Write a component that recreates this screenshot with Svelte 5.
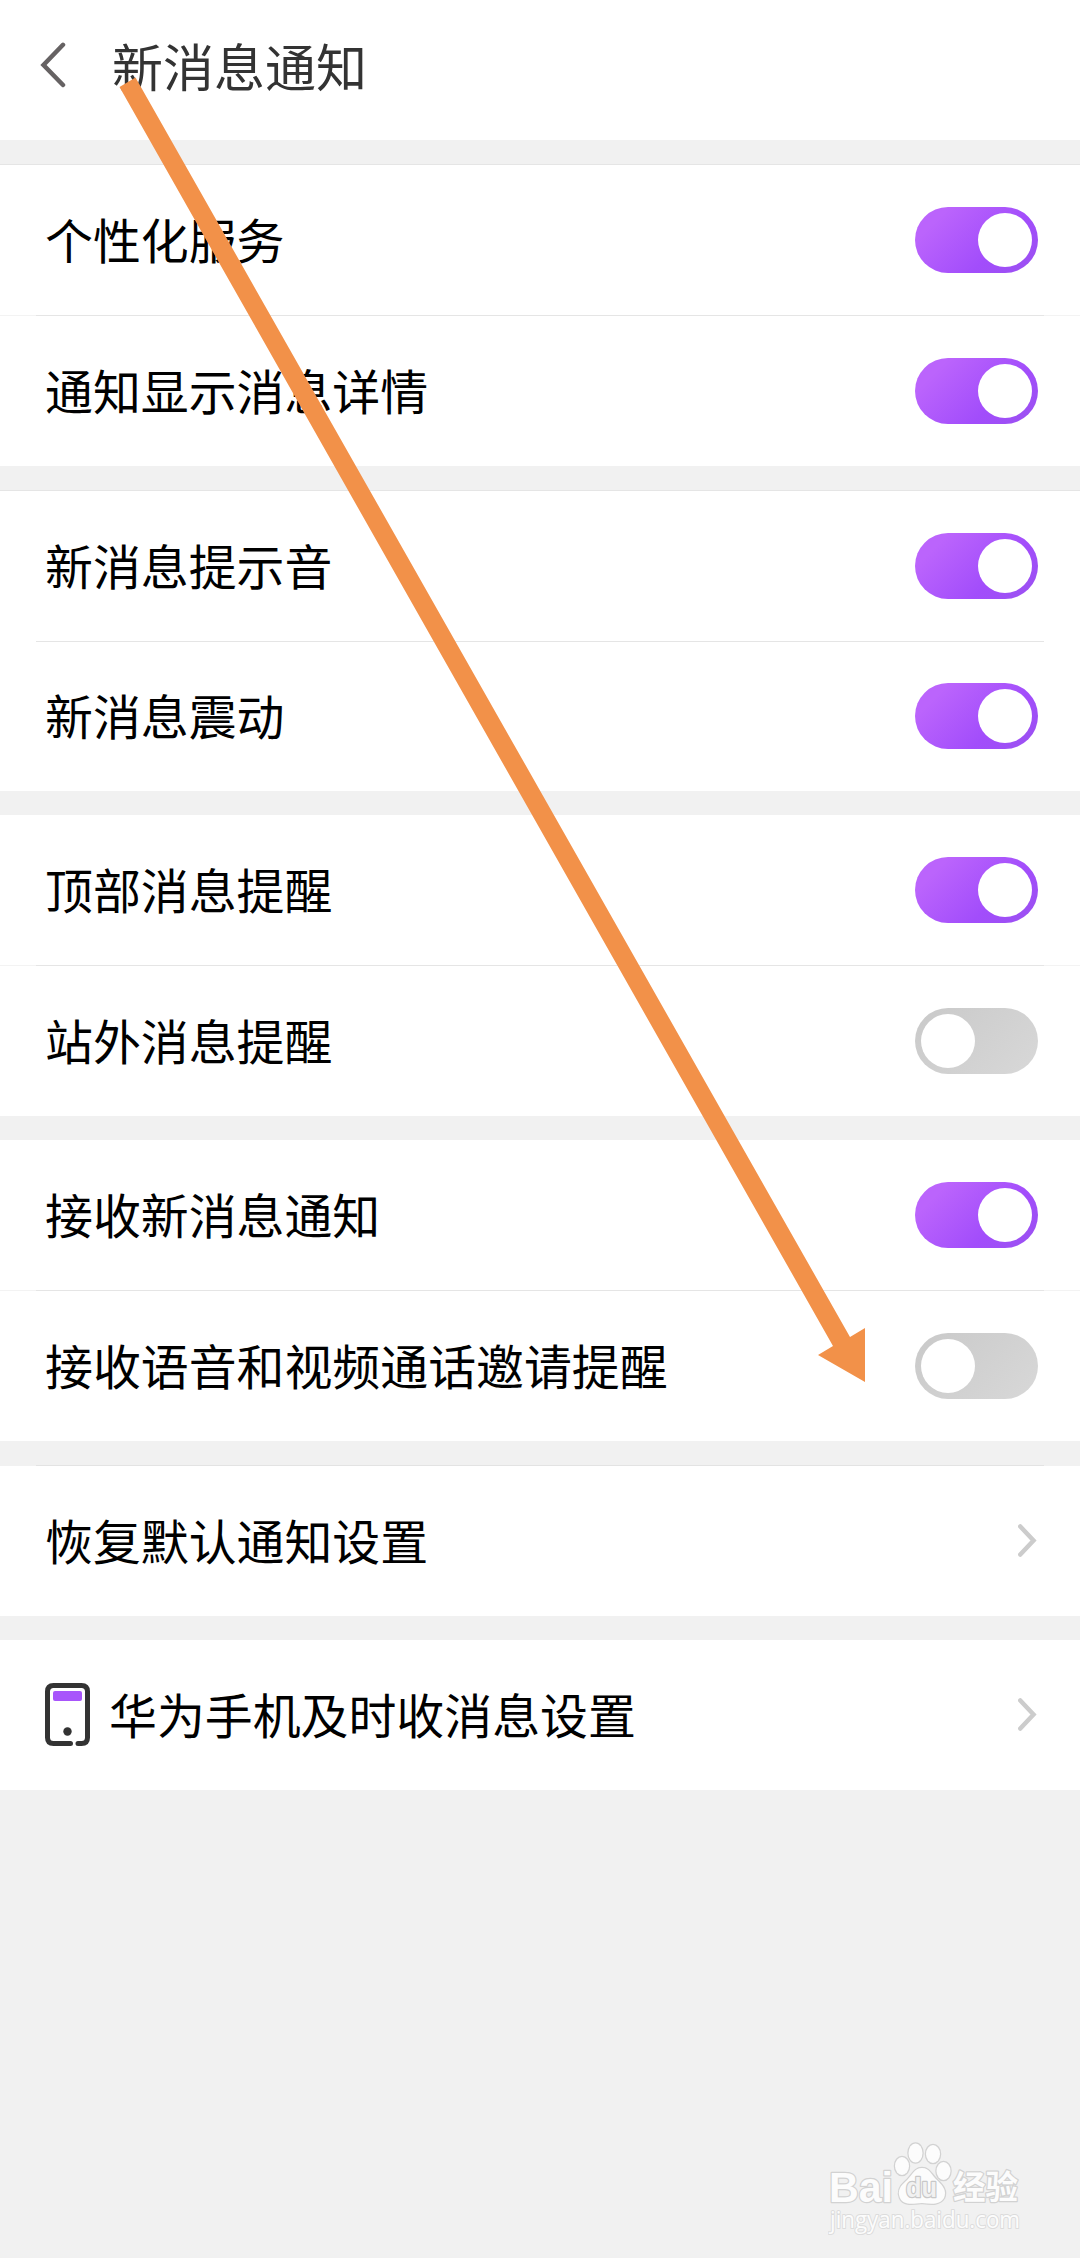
<script lang="ts">
    type Item = { label: string; kind: "on" | "off" | "link"; phone?: boolean };

    // settings, one inner array per white block
    let groups: { line: string; items: Item[] }[] = $state([
        { line: "full", items: [{ label: "个性化服务", kind: "on" }, { label: "通知显示消息详情", kind: "on" }] },
        { line: "full compact", items: [{ label: "新消息提示音", kind: "on" }, { label: "新消息震动", kind: "on" }] },
        { line: "none", items: [{ label: "顶部消息提醒", kind: "on" }, { label: "站外消息提醒", kind: "off" }] },
        { line: "none", items: [{ label: "接收新消息通知", kind: "on" }, { label: "接收语音和视频通话邀请提醒", kind: "off" }] },
        { line: "inset", items: [{ label: "恢复默认通知设置", kind: "link" }] },
        { line: "none", items: [{ label: "华为手机及时收消息设置", kind: "link", phone: true }] }
    ]);

    function toggle(item: Item): void
    {
        item.kind = item.kind === "on" ? "off" : "on";
    }
</script>

<main class="page">
    <header class="header">
        <svg class="back" width="26" height="48" viewBox="0 0 26 48">
            <path d="M23 2.800L3.500 23L23 43" />
        </svg>
        <h1>新消息通知</h1>
    </header>

    {#each groups as group}
        <div class="gap {group.line}"></div>
        <section class="group">
            {#each group.items as item}
                <div class="row">
                    {#if item.phone}
                        <svg class="phone" width="46" height="64" viewBox="0 0 46 64">
                            <path d="M25.500 60.500H8.500Q2.500 60.500 2.500 54.500V8.500Q2.500 2.500 8.500 2.500H36.500Q42.500 2.500 42.500 8.500V54.500Q42.500 60.500 36.500 60.500H33" />
                            <rect x="8" y="8" width="29" height="10" rx="2" />
                            <circle cx="22.500" cy="48.500" r="4.200" />
                        </svg>
                    {/if}
                    <span class="label">{item.label}</span>
                    {#if item.kind === "link"}
                        <svg class="chevron" width="19" height="34" viewBox="0 0 19 34">
                            <path d="M2.300 2.500L15.500 16.500L2.300 30.500" />
                        </svg>
                    {:else}
                        <button class="switch" class:on={item.kind === "on"} aria-label={item.label} onclick={() => toggle(item)}>
                            <span class="knob"></span>
                        </button>
                    {/if}
                </div>
            {/each}
        </section>
    {/each}

    <!-- arrow drawn over the list -->
    <svg class="arrow" width="1080" height="2258" viewBox="0 0 1080 2258">
        <polygon points="119.500,87 135.500,77.500 850,1337 865,1328 865,1382 818,1355 833,1346" />
    </svg>

    <svg class="watermark" width="200" height="104" viewBox="0 0 200 104">
        <g class="mark">
            <text class="brand" x="1" y="61.500" textLength="64" lengthAdjust="spacingAndGlyphs">Bai</text>
            <ellipse cx="74" cy="26" rx="7" ry="9" />
            <ellipse cx="87.500" cy="13" rx="7" ry="9.500" />
            <ellipse cx="105" cy="14" rx="7" ry="9" />
            <ellipse cx="115.500" cy="31" rx="7" ry="9" />
            <path d="M94 28C86 28 84 36 77 42C70 48 70 53 72 58C75 65 83 64 94 63C104 64 112 65 116 58C119 51 115 46 110 41C103 35 102 28 94 28Z" />
            <text class="du" x="78" y="57" textLength="31" lengthAdjust="spacingAndGlyphs">du</text>
            <text class="cn" x="125" y="59" textLength="65" lengthAdjust="spacingAndGlyphs">经验</text>
            <text class="site" x="2" y="88" textLength="190" lengthAdjust="spacingAndGlyphs">jingyan.baidu.com</text>
        </g>
    </svg>
</main>

<style>
    :global(body)
    {
        background: #f1f1f1;
    }

    .page
    {
        position: relative;
        width: 1080px;
        height: 2258px;
        overflow: hidden;
        background: #f1f1f1;
        font-family: "Noto Sans CJK SC", sans-serif;
    }

    .header
    {
        box-sizing: border-box;
        height: 140px;
        display: flex;
        align-items: center;
        padding: 0 0 8px 40px;
        background: #fff;
    }

    .back
    {
        margin-right: 46px;
    }

    .back path
    {
        fill: none;
        stroke: #666263;
        stroke-width: 4.500;
        stroke-linecap: round;
    }

    h1
    {
        margin: 0;
        padding-bottom: 2px;
        font-size: 51px;
        font-weight: 400;
        line-height: 60px;
        color: #333;
    }

    .gap
    {
        box-sizing: border-box;
        height: 24px;
    }

    .gap.full
    {
        height: 25px;
        border-bottom: 1px solid #e5e5e5;
    }

    .gap.inset
    {
        height: 25px;
        background: linear-gradient(#e3e3e3, #e3e3e3) 36px 100% / 1008px 1px no-repeat;
    }

    .group
    {
        background: #fff;
    }

    .row
    {
        box-sizing: border-box;
        height: 150px;
        display: flex;
        align-items: center;
        padding: 0 42px 0 45px;
    }

    /* divider: strong between the insets, faint out to the edges */
    .row + .row
    {
        height: 151px;
        padding-top: 1px;
        background:
            linear-gradient(#e5e5e5, #e5e5e5) 36px 0 / 1008px 1px no-repeat,
            linear-gradient(#f3f3f3, #f3f3f3) 0 0 / 100% 1px no-repeat;
    }

    .compact + .group .row + .row
    {
        height: 150px;
        padding-top: 0;
        background: linear-gradient(#e5e5e5, #e5e5e5) 36px 0 / 1008px 1px no-repeat;
    }

    .label
    {
        flex: 1;
        padding-bottom: 4px;
        font-size: 47.900px;
        line-height: 60px;
        color: #000;
        white-space: nowrap;
    }

    .phone
    {
        margin-right: 18px;
    }

    .phone path
    {
        fill: none;
        stroke: #333;
        stroke-width: 5;
        stroke-linecap: round;
    }

    .phone rect
    {
        fill: #a855fb;
    }

    .phone circle
    {
        fill: #333;
    }

    .chevron
    {
        margin-right: 1px;
    }

    .chevron path
    {
        fill: none;
        stroke: #ccc;
        stroke-width: 4.500;
        stroke-linecap: round;
    }

    .switch
    {
        box-sizing: border-box;
        width: 123px;
        height: 66px;
        display: flex;
        padding: 6px;
        border: none;
        border-radius: 33px;
        background: linear-gradient(135deg, #c9c9c9, #d8d8d8);
    }

    .switch.on
    {
        justify-content: flex-end;
        background: linear-gradient(135deg, #bb64fc 18%, #a24dfb 65%, #9a51f0);
    }

    .knob
    {
        width: 54px;
        height: 54px;
        border-radius: 50%;
        background: #fff;
    }

    .arrow
    {
        position: absolute;
        top: 0;
        left: 0;
        pointer-events: none;
    }

    .arrow polygon
    {
        fill: #f29149;
    }

    .watermark
    {
        position: absolute;
        left: 828px;
        top: 2140px;
    }

    .mark
    {
        fill: #fcfcfc;
        stroke: #d2d2d2;
        stroke-width: 2.500;
        stroke-linejoin: round;
        paint-order: stroke;
    }

    .brand
    {
        font: 700 42px "Liberation Sans", sans-serif;
    }

    .du
    {
        font: 700 27px "Liberation Sans", sans-serif;
        fill: #f1f1f1;
        stroke: #c8c8c8;
    }

    .cn
    {
        font: 700 33px "Noto Sans CJK SC", sans-serif;
    }

    .site
    {
        font: 400 23px "Open Sans", sans-serif;
        stroke: #dcdcdc;
        stroke-width: 2;
    }
</style>
